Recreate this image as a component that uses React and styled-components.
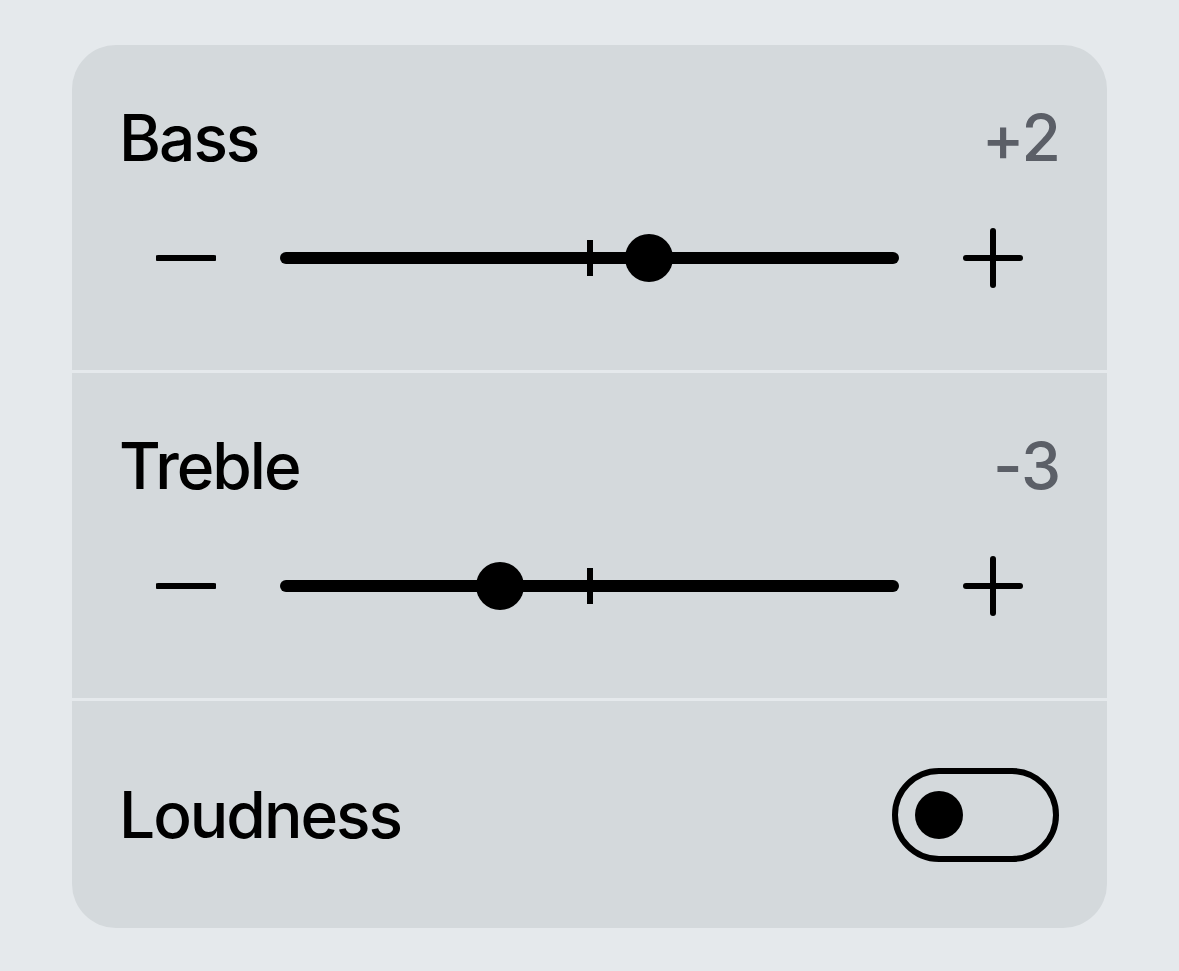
import { useState } from "react";
import styled, { createGlobalStyle } from "styled-components";

const GlobalStyle = createGlobalStyle`
    html, body {
        margin: 0;
        padding: 0;
        background: #e5e9ec;
    }
    body {
        font-family: Inter, "Noto Sans", "Liberation Sans", sans-serif;
        -webkit-font-smoothing: antialiased;
    }
`;

const Page = styled.div`
    padding: 45px 72px 43px;
    box-sizing: border-box;
    width: 1179px;
`;

const Card = styled.div`
    background: #d4d9dc;
    border-radius: 44px;
    overflow: hidden;
    display: flex;
    flex-direction: column;
`;

const Section = styled.section`
    box-sizing: border-box;
    height: ${(p) => p.$height}px;
    padding: 61px 50px 0;
    & + & {
        border-top: 3px solid #e5e9ec;
    }
`;

const Header = styled.div`
    display: flex;
    justify-content: space-between;
    align-items: center;
    height: 64px;
`;

const Title = styled.span`
    font-size: 64px;
    font-weight: 500;
    line-height: 1;
    color: #000;
    letter-spacing: -2px;
    margin-left: -3px;
`;

const Value = styled.span`
    font-size: 64px;
    font-weight: 500;
    line-height: 1;
    color: #5b5f67;
    letter-spacing: -1px;
    margin-right: -3px;
`;

const SliderRow = styled.div`
    display: flex;
    align-items: center;
    gap: 64px;
    height: 60px;
    margin-top: 58px;
    padding: 0 34px;
`;

const IconButton = styled.button`
    width: 60px;
    height: 60px;
    padding: 0;
    border: none;
    background: none;
    display: flex;
    align-items: center;
    justify-content: center;
    cursor: pointer;
    flex: none;
`;

const Track = styled.div`
    position: relative;
    flex: 1;
    height: 12px;
    border-radius: 6px;
    background: #000;
`;

const Tick = styled.div`
    position: absolute;
    left: 50%;
    top: 50%;
    width: 6px;
    height: 36px;
    transform: translate(-50%, -50%);
    background: #000;
`;

const Thumb = styled.div`
    position: absolute;
    top: 50%;
    width: 48px;
    height: 48px;
    border-radius: 50%;
    background: #000;
    transform: translate(-50%, -50%);
`;

const ToggleRow = styled.div`
    display: flex;
    align-items: center;
    justify-content: space-between;
    height: 100%;
`;

const Toggle = styled.button`
    box-sizing: border-box;
    width: 167px;
    height: 94px;
    margin-right: -2px;
    border: 6px solid #000;
    border-radius: 47px;
    background: transparent;
    padding: ${(p) => (p.$on ? "0 17px 0 0" : "0 0 0 17px")};
    display: flex;
    align-items: center;
    justify-content: ${(p) => (p.$on ? "flex-end" : "flex-start")};
    cursor: pointer;
`;

const Knob = styled.span`
    width: 48px;
    height: 48px;
    border-radius: 50%;
    background: #000;
`;

const Minus = () => (
    <svg width="60" height="60" viewBox="0 0 60 60">
        <line x1="2" y1="30" x2="58" y2="30" stroke="#000" strokeWidth="6" strokeLinecap="round" />
    </svg>
);

const Plus = () => (
    <svg width="60" height="60" viewBox="0 0 60 60">
        <line x1="3" y1="30" x2="57" y2="30" stroke="#000" strokeWidth="6" strokeLinecap="round" />
        <line x1="30" y1="3" x2="30" y2="57" stroke="#000" strokeWidth="6" strokeLinecap="round" />
    </svg>
);

const ToneSlider = ({ label, value, onChange, height }) => {
    const pos = 50 + value * 4.8;
    const text = value > 0 ? `+${value}` : `${value}`;

    return (
        <Section $height={height}>
            <Header>
                <Title>{label}</Title>
                <Value>{text}</Value>
            </Header>
            <SliderRow>
                <IconButton onClick={() => onChange(Math.max(-10, value - 1))} aria-label="decrease">
                    <Minus />
                </IconButton>
                <Track>
                    <Tick />
                    <Thumb style={{ left: `${pos}%` }} />
                </Track>
                <IconButton onClick={() => onChange(Math.min(10, value + 1))} aria-label="increase">
                    <Plus />
                </IconButton>
            </SliderRow>
        </Section>
    );
};

const LoudnessSection = styled(Section)`
    padding-top: 0;
`;

export default function App() {
    const [bass, setBass] = useState(2);
    const [treble, setTreble] = useState(-3);
    const [loudness, setLoudness] = useState(false);

    return (
        <Page>
            <GlobalStyle />
            <Card>
                <ToneSlider label="Bass" value={bass} onChange={setBass} height={325} />
                <ToneSlider label="Treble" value={treble} onChange={setTreble} height={328} />
                <LoudnessSection $height={230}>
                    <ToggleRow>
                        <Title>Loudness</Title>
                        <Toggle $on={loudness} onClick={() => setLoudness(!loudness)} aria-label="Loudness">
                            <Knob />
                        </Toggle>
                    </ToggleRow>
                </LoudnessSection>
            </Card>
        </Page>
    );
}
